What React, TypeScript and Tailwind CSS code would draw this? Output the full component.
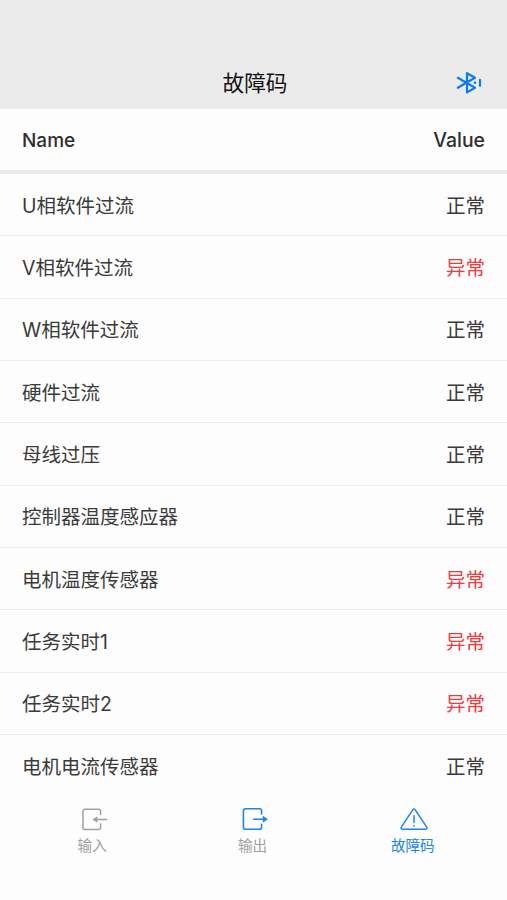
import React from 'react';

interface FaultItem {
  name: string;
  fault: boolean;
}

interface TabItem {
  label: string;
  icon: React.ReactNode;
  className: string;
}

const faults: FaultItem[] = [
  { name: 'U相软件过流', fault: false },
  { name: 'V相软件过流', fault: true },
  { name: 'W相软件过流', fault: false },
  { name: '硬件过流', fault: false },
  { name: '母线过压', fault: false },
  { name: '控制器温度感应器', fault: false },
  { name: '电机温度传感器', fault: true },
  { name: '任务实时1', fault: true },
  { name: '任务实时2', fault: true },
  { name: '电机电流传感器', fault: false },
];

const BluetoothIcon = () => (
  <svg width="28" height="24" viewBox="0 0 28 24" fill="none" stroke="#0a7cf5" strokeWidth="2.2" strokeLinecap="round" strokeLinejoin="round">
    <path d="M2.8 6.8 20 16.8 12 21.4V2.2L20 6.8 2.8 16.8" />
    <path d="M25 8.8v6" />
    <circle cx="20" cy="11.8" r="1.3" fill="#0a7cf5" stroke="none" />
  </svg>
);

const InputIcon = () => (
  <svg width="28" height="24" viewBox="0 0 28 24" fill="none" stroke="currentColor" strokeWidth="1.5" strokeLinecap="round">
    <path d="M20.6 7.5V4.2a2 2 0 0 0-2-2H5a2 2 0 0 0-2 2v16.2a2 2 0 0 0 2 2h13.6a2 2 0 0 0 2-2v-3.3" />
    <path d="M26.6 12.5H14" />
    <path d="M17.4 9.2v6.6l-5-3.3z" fill="currentColor" stroke="none" />
  </svg>
);

const OutputIcon = () => (
  <svg width="28" height="24" viewBox="0 0 28 24" fill="none" stroke="#2184e8" strokeWidth="1.6" strokeLinecap="round">
    <path d="M21.6 7V3.8a2 2 0 0 0-2-2H5.4a2 2 0 0 0-2 2v16.4a2 2 0 0 0 2 2h14.2a2 2 0 0 0 2-2v-3" />
    <path d="M13.6 12.3H25" />
    <path d="M22.8 8.8v7l5.1-3.5z" fill="#2184e8" stroke="none" />
  </svg>
);

const WarningIcon = () => (
  <svg width="28" height="24" viewBox="0 0 28 24" fill="none" stroke="currentColor" strokeWidth="1.5" strokeLinecap="round" strokeLinejoin="round">
    <path d="M12.9 2.7 1.3 20.2a1.3 1.3 0 0 0 1.1 2h23.2a1.3 1.3 0 0 0 1.1-2L15.1 2.7a1.3 1.3 0 0 0-2.2 0z" />
    <path d="M14 8.8v6.8M14 18.6v.3" />
  </svg>
);

const tabs: TabItem[] = [
  { label: '输入', icon: <InputIcon />, className: 'text-[#a0a0a0]' },
  { label: '输出', icon: <OutputIcon />, className: 'text-[#a0a0a0]' },
  { label: '故障码', icon: <WarningIcon />, className: 'text-[#2184e8]' },
];

const App: React.FC = () => {
  return (
    <div className="flex h-[900px] w-[507px] flex-col overflow-hidden bg-[#fdfdfd] font-['Inter','Noto_Sans_CJK_SC',sans-serif] text-[#3a3a3a]">
      <header className="grid h-[108.5px] shrink-0 grid-cols-[1fr_auto_1fr] items-end bg-[#ebebeb] pr-6 pl-[27px]">
        <h1 className="col-start-2 pb-[10px] text-[21.7px] leading-8 text-[#111]">故障码</h1>
        <button className="justify-self-end pb-[14px]">
          <BluetoothIcon />
        </button>
      </header>

      <div className="flex h-[65.5px] shrink-0 items-center justify-between border-b-[4px] border-[#ebebeb] px-[22px] pt-[3px] text-[19px] font-medium text-[#2e2e2e]">
        <span>Name</span>
        <span className="text-[19.4px]">Value</span>
      </div>

      <ul className="shrink-0">
        {faults.map((item) => (
          <li
            key={item.name}
            className="flex h-[62.35px] items-center justify-between border-b border-[#ececec] px-[22px] pt-[3px] text-[19.5px] last:border-transparent"
          >
            <span>{item.name}</span>
            <span className={item.fault ? 'text-[#f03a3c]' : ''}>{item.fault ? '异常' : '正常'}</span>
          </li>
        ))}
      </ul>

      <nav className="grid grid-cols-3 pt-[9.5px] pr-[14px] pl-[12px]">
        {tabs.map((tab) => (
          <button key={tab.label} className={`flex flex-col items-center text-[14.6px] ${tab.className}`}>
            <span className="pl-[3px]">{tab.icon}</span>
            <span className="mt-[5.5px] leading-5">{tab.label}</span>
          </button>
        ))}
      </nav>
    </div>
  );
};

export default App;
